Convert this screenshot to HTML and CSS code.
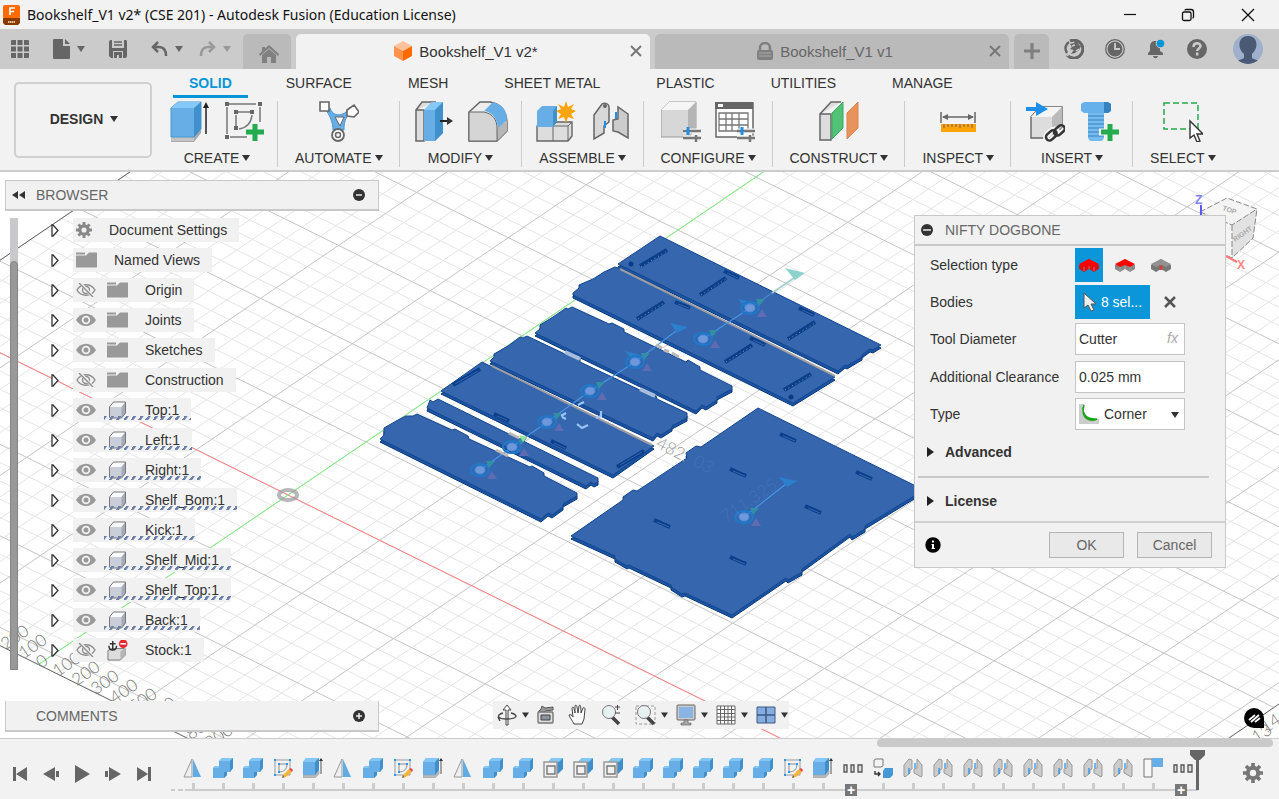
FILE: index.html
```html
<!DOCTYPE html>
<html lang="en">
<head>
    <meta charset="UTF-8">
    <meta name="viewport" content="width=device-width, initial-scale=1.0">
    <title>Bookshelf_V1 v2* (CSE 201) - Autodesk Fusion (Education License)</title>
    <link rel="stylesheet" href="styles.css">
</head>
<body>
    <!-- shared icons -->
    <svg class="sprite" aria-hidden="true">
        <symbol id="caret" viewBox="0 0 8 6"><path d="M0 0h8L4 6z" fill="currentColor"/></symbol>
        <symbol id="close" viewBox="0 0 12 12"><path d="M1 1l10 10M11 1L1 11" stroke="currentColor" stroke-width="2" fill="none"/></symbol>
        <symbol id="gear" viewBox="0 0 20 20">
            <circle cx="10" cy="10" r="5.2" fill="none" stroke="currentColor" stroke-width="4"/>
            <path d="M10 0v4M10 16v4M0 10h4M16 10h4M3 3l3 3M14 14l3 3M17 3l-3 3M6 14l-3 3" stroke="currentColor" stroke-width="3.6"/>
        </symbol>
        <symbol id="folder" viewBox="0 0 21 17"><path d="M0 1h9v2H0zM0 4h10l3-3h8v15H0z" fill="#999"/></symbol>
        <symbol id="eye" viewBox="0 0 20 14">
            <path d="M0 7C5-1.500 15-1.500 20 7 15 15 5 15 0 7z" fill="#999"/>
            <circle cx="10" cy="7" r="3.400" fill="none" stroke="#f1f1f1" stroke-width="1.800"/>
        </symbol>
        <symbol id="eye-off" viewBox="0 0 20 14">
            <path d="M1 7C5 0 15 0 19 7 15 14 5 14 1 7z" fill="none" stroke="#8d8d8d" stroke-width="1.400"/>
            <circle cx="10" cy="7" r="3.500" fill="none" stroke="#8d8d8d" stroke-width="1.400"/>
            <path d="M4 0l13 14" stroke="#f1f1f1" stroke-width="3"/><path d="M3 0l14 14" stroke="#8d8d8d" stroke-width="1.400"/>
        </symbol>
        <symbol id="body" viewBox="0 0 18 18">
            <path d="M1 6l4-5h12v11l-4 5H1z" fill="#c9ced8"/><path d="M1 6l4-5h12l-4 5z" fill="#fafbfd"/><path d="M13 6l4-5v11l-4 5z" fill="#a3abb9"/>
            <path d="M1 6l4-5h12v11l-4 5H2l-1-1z" fill="none" stroke="#777"/>
        </symbol>
        <symbol id="anchor" viewBox="0 0 22 22">
            <path d="M1 11l4-2h14v7l-5 5H1z" fill="#ddd" stroke="#777"/><path d="M14 12l5-4v8l-5 5z" fill="#b5b5b5"/>
            <path d="M6 1v9M3 4h6M2 6c0 6 8 6 8 0" fill="none" stroke="#333" stroke-width="1.500"/>
            <circle cx="17" cy="4" r="4.500" fill="#e8252d"/><path d="M14 4h6" stroke="#fff" stroke-width="1.600"/>
        </symbol>
        <symbol id="tl-mirror" viewBox="0 0 20 20">
            <path d="M9 1v18H1z" fill="#eee" stroke="#999"/><path d="M10 1v18h8z" fill="#5fade4"/>
        </symbol>
        <symbol id="tl-combine" viewBox="0 0 20 20">
            <path d="M0 10l2-2h4V3l3-3h11v10l-3 4h-3v3l-3 3H0z" fill="#66aee5"/>
            <path d="M6 3l3-3h11l-3 3zM0 10l2-2h4v2z" fill="#84c6f4"/><path d="M17 3l3-3v10l-3 4zM11 14h3v3l-3 3z" fill="#3f8fcb"/>
        </symbol>
        <symbol id="tl-sketch" viewBox="0 0 20 20">
            <path d="M2 2h15v15H2z" fill="none" stroke="#999"/><path d="M6 6h8c0 5-3 8-8 8z" fill="none" stroke="#8b8b8b"/>
            <path d="M1 1h2v2H1zM16 1h2v2h-2zM1 16h2v2H1zM5 5h2v2H5zM13 5h2v2h-2zM5 13h2v2H5z" fill="#2b96ec"/>
            <path d="M10 17l6-6 3 3-6 5-3 1z" fill="#f5b83f"/><path d="M16 11l2-1 2 2-1 2z" fill="#e44"/><path d="M10 17l1 2-2 1z" fill="#444"/>
        </symbol>
        <symbol id="tl-extrude" viewBox="0 0 20 20">
            <path d="M0 17h12l4-4v3l-4 4H0z" fill="#b9b9b9" stroke="#999" stroke-width=".5"/>
            <path d="M0 4l3-4h13v12l-4 5H0z" fill="#66aee5"/><path d="M0 4l3-4h13l-4 4z" fill="#84c6f4"/><path d="M12 4l4-4v12l-4 5z" fill="#3f8fcb"/>
            <path d="M18 2v14" stroke="#555"/><path d="M16 3l2-3 2 3z" fill="#333"/>
        </symbol>
        <symbol id="tl-shell" viewBox="0 0 20 20">
            <path d="M5 4l4-4h11v11l-5 5z" fill="#3f8fcb"/><path d="M5 4l4-4h11l-4 4z" fill="#84c6f4"/>
            <path d="M1 4h13v15H1z" fill="#f1f1f1" stroke="#999" stroke-width="1.500"/><path d="M4 8h8v8H4z" fill="#f1f1f1" stroke="#777" stroke-width="1.400"/>
        </symbol>
        <symbol id="tl-joint" viewBox="0 0 20 20">
            <path d="M1 7l5-6 3 1v9l-2 1v3l-5 4-1-1z" fill="#ccc" stroke="#999"/><path d="M19 7l-5-6v9l-3 1v4l2 1 5 3 1-1z" fill="#ccc" stroke="#999"/>
            <path d="M6 10v6M12 5v5" stroke="#2b96ec" stroke-width="1.300"/>
        </symbol>
        <symbol id="tl-group" viewBox="0 0 20 20"><path d="M1 7h3v7H1zM8 7h3v7H8zM15 7h4v7h-4z" fill="#ddd" stroke="#555" stroke-width="1.300"/></symbol>
        <symbol id="tl-component" viewBox="0 0 20 20">
            <path d="M1 2l2-1h7v7l-2 1H1z" fill="#f4f4f4" stroke="#777"/><path d="M2 13v3h5M5 14l2 2-2 2" fill="none" stroke="#333" stroke-width="1.400"/>
            <path d="M10 13l2-3h8v7l-3 3h-7z" fill="#4598d6"/>
        </symbol>
        <symbol id="tl-flag" viewBox="0 0 20 20"><path d="M1 1h8v18H1z" fill="#f6f6f6" stroke="#777"/><path d="M9 0h11v9H9z" fill="#66aee5"/></symbol>
        <symbol id="marker" viewBox="-15 -15 40 30">
            <ellipse rx="9" ry="6" fill="none" stroke="#2278c8" stroke-width="2.200"/><ellipse rx="5" ry="4" fill="#6f98dc" stroke="#4c8fe0"/>
            <path d="M6-9h9L9-2z" fill="#338fa6"/><path d="M7 9l5-8 5 8z" fill="#5e6cb4"/>
        </symbol>
    </svg>

    <header class="title-bar">
        <svg class="app-logo" viewBox="0 0 18 20"><rect width="17" height="14" rx="2" fill="#ff6b00"/><path d="M0 13h17v5l-2 2H2l-2-2z" fill="#8a3a00"/><path d="M7 10V3h5M7 6.500h4" stroke="#fff" stroke-width="1.700" fill="none"/><path d="M5 17h7" stroke="#e5c5ae" stroke-dasharray="1.500 .5" stroke-width="2"/></svg>
        <span class="window-title">Bookshelf_V1 v2* (CSE 201) - Autodesk Fusion (Education License)</span>
        <div class="window-controls">
            <button aria-label="Minimize"><svg viewBox="0 0 14 14"><path d="M1 6.500h12" stroke="#111" stroke-width="1.200"/></svg></button>
            <button aria-label="Restore"><svg viewBox="0 0 14 14" fill="none" stroke="#111" stroke-width="1.300"><rect x="1.500" y="4" width="8.500" height="8.500" rx="1.500"/><path d="M4 2.500c0-.8.500-1 1-1h5c1.500 0 2.500 1 2.500 2.500v5c0 .6-.3 1-1 1"/></svg></button>
            <button aria-label="Close"><svg viewBox="0 0 14 14"><path d="M1 1l12 12M13 1L1 13" stroke="#111" stroke-width="1.300"/></svg></button>
        </div>
    </header>

    <nav class="tab-bar">
        <div class="quick-tools">
            <button class="quick" aria-label="Data panel"><svg width="18" height="18" viewBox="0 0 18 18" fill="#666"><path d="M0 1a1 1 0 011-1h4v5H0zM6.500 0h5v5h-5zM13 0h4a1 1 0 011 1v4h-5zM0 6.500h5v5H0zM6.500 6.500h5v5h-5zM13 6.500h5v5h-5zM0 13h5v5H1a1 1 0 01-1-1zM6.500 13h5v5h-5zM13 13h5v4a1 1 0 01-1 1h-4z"/></svg></button>
            <button class="quick file" aria-label="File"><svg width="17" height="20" viewBox="0 0 17 20" fill="#666"><path d="M0 1a1 1 0 011-1h9v7h7v12a1 1 0 01-1 1H1a1 1 0 01-1-1z"/><path d="M12 0l5 5h-5z"/></svg><svg class="caret"><use href="#caret"/></svg></button>
            <button class="quick save" aria-label="Save"><svg width="18" height="18" viewBox="0 0 18 18"><path d="M0 2a2 2 0 012-2h15l1 1v15a2 2 0 01-2 2H2l-2-2z" fill="#666"/><path d="M3 0h12v8H3zM4 11h10v7H4z" fill="#cbcbcb"/><path d="M5 2h8M5 5h8" stroke="#666" stroke-width="1.500"/><path d="M5 12h8v6h-3v-3H8v3H5z" fill="#666"/></svg></button>
            <button class="quick" aria-label="Undo"><svg width="17" height="16" viewBox="0 0 17 16" fill="none" stroke="#666" stroke-width="2.500"><path d="M7 1L2 6l5 5M2 6h6c5 0 7 3 7 9"/></svg><svg class="caret"><use href="#caret"/></svg></button>
            <button class="quick redo" aria-label="Redo"><svg width="17" height="16" viewBox="0 0 17 16" fill="none" stroke="#999" stroke-width="2.500"><path d="M10 1l5 5-5 5M15 6H9C4 6 2 9 2 15"/></svg><svg class="caret"><use href="#caret"/></svg></button>
        </div>
        <button class="doc-tab home" aria-label="Home"><svg width="20" height="18" viewBox="0 0 20 18" fill="#808080"><path d="M10 0l10 9-1 2-9-8-9 8-1-2zM3 2h3v4L3 8z"/><path d="M3 10l7-6 7 6v8h-5v-6H8v6H3z"/></svg></button>
        <div class="doc-tab active">
            <svg width="18" height="20" viewBox="0 0 18 20"><path d="M9 0l9 5-9 5-9-5z" fill="#ffc29a"/><path d="M0 5l9 5v10l-9-5z" fill="#ff934c"/><path d="M18 5l-9 5v10l9-5z" fill="#ff6b00"/></svg>
            <span>Bookshelf_V1 v2*</span>
            <button class="tab-close" aria-label="Close tab"><svg><use href="#close"/></svg></button>
        </div>
        <div class="doc-tab">
            <svg width="16" height="18" viewBox="0 0 16 18"><path d="M3 9V6a5 5 0 0110 0v3" fill="none" stroke="#808080" stroke-width="2.500"/><rect y="8" width="16" height="10" rx="2" fill="#808080"/><path d="M2 11h12M2 14h12" stroke="#aaa"/></svg>
            <span>Bookshelf_V1 v1</span>
            <button class="tab-close" aria-label="Close tab"><svg><use href="#close"/></svg></button>
        </div>
        <button class="doc-tab plus" aria-label="New tab"><svg width="16" height="16" viewBox="0 0 16 16"><path d="M8 0v16M0 8h16" stroke="#808080" stroke-width="3.200"/></svg></button>
        <div class="account">
            <button aria-label="Extensions"><svg width="20" height="20" viewBox="0 0 20 20"><path d="M6 2a9 9 0 11-3 14" fill="none" stroke="#666" stroke-width="3"/><path d="M3 14C0 9 2 5 5 3" fill="none" stroke="#666" stroke-width="2.500"/><path d="M6 5l4-1 1-2 3 1 1 3 2 1-2 4-4 3-4 1 2-4-3-1 2-2z" fill="#666"/><path d="M3 17l6-6M8 7l3-1M12 12l3-2" stroke="#cbcbcb" stroke-width="1.500"/></svg></button>
            <button aria-label="Job status"><svg width="20" height="20" viewBox="0 0 20 20"><circle cx="10" cy="10" r="9.300" fill="none" stroke="#666" stroke-width="1.300"/><circle cx="10" cy="10" r="7.500" fill="#666"/><path d="M10 4v6h5" stroke="#cbcbcb" stroke-width="1.800" fill="none"/></svg></button>
            <button aria-label="Notifications"><svg width="20" height="20" viewBox="0 0 20 20"><path d="M2 16v-2l2-2V8c0-4 2-6 5-6s5 2 5 6v4l3 2v2zM7 17h5c-1 3-4 3-5 0z" fill="#666"/><circle cx="14.500" cy="4.500" r="4.300" fill="#0696d7" stroke="#cbcbcb"/></svg></button>
            <button aria-label="Help"><svg width="20" height="20" viewBox="0 0 20 20"><circle cx="10" cy="10" r="10" fill="#666"/><path d="M6.500 8c0-5 7-4.500 7-1 0 2.500-3.300 2.500-3.300 5M10.200 13.500v3" stroke="#cbcbcb" stroke-width="2.500" fill="none"/></svg></button>
            <button class="avatar" aria-label="Profile"><svg width="30" height="30" viewBox="0 0 30 30"><defs><clipPath id="round"><circle cx="15" cy="15" r="15"/></clipPath></defs><g clip-path="url(#round)"><path d="M0 0h30v30H0z" fill="#9fb0cc"/><path d="M2 30c1-4 6-4 9-6v-4C4 14 5 2 15 2s11 12 4 18v4c3 2 8 2 9 6z" fill="#4a5a75"/></g></svg></button>
        </div>
    </nav>

    <section class="ribbon">
        <button class="workspace">DESIGN <svg class="caret"><use href="#caret"/></svg></button>
        <div class="ribbon-main">
            <div class="ribbon-tabs">
                <button class="selected">SOLID</button><button>SURFACE</button><button>MESH</button><button>SHEET METAL</button><button>PLASTIC</button><button>UTILITIES</button><button>MANAGE</button>
            </div>
            <div class="groups">
                <div class="group">
                    <div class="tools">
                        <button aria-label="Extrude"><svg viewBox="0 0 40 41"><path d="M1 36h23l7-8v4l-7 9H1z" fill="#aaa"/><path d="M1 35h23v5H1z" fill="#c4c4c4"/><path d="M1 7l7-6h23v27l-7 8H1z" fill="#66aee5" stroke="#4797d0"/><path d="M1 7l7-6h23l-7 6z" fill="#86c9f8"/><path d="M24 7l7-6v27l-7 8z" fill="#4090cc"/><path d="M36 5v28" stroke="#222" stroke-width="1.500"/><path d="M33 7l3-6 3 6z" fill="#222"/></svg></button>
                        <button aria-label="Create sketch"><svg viewBox="0 0 40 41"><path d="M5 3h27M3 6v27M36 6v15M6 36h17M14 11h12M12 14v12M28 14c-1 9-6 13-13 14" fill="none" stroke="#777" stroke-width="1.500"/><path d="M1 1h4v4H1zM34 1h4v4h-4zM1 34h4v4H1zM10 9h4v4h-4zM26 9h4v4h-4zM10 25h4v4h-4z" fill="#666"/><path d="M31 23v17M22 31h18" stroke="#23ab4e" stroke-width="5"/></svg></button>
                    </div>
                    <button class="group-label">CREATE<svg class="caret"><use href="#caret"/></svg></button>
                </div>
                <div class="group">
                    <div class="tools">
                        <button aria-label="Automate"><svg viewBox="0 0 40 41"><path d="M6 8l5-1c2 6 7 9 15 5l5-6 4 5c-8 3-10 8-10 18H14C14 22 11 14 6 8z" fill="#66aee5" stroke="#4797d0"/><path d="M16 16h9l-4 9z" fill="#f7f7f7" stroke="#666"/><path d="M1 1h9v9H1zM28 9l7-5 5 7-5 5-7-1z" fill="#fff" stroke="#666" stroke-width="1.600"/><circle cx="19" cy="34" r="6" fill="#fff" stroke="#666" stroke-width="1.800"/><circle cx="19" cy="34" r="2.500" fill="none" stroke="#666" stroke-width="1.500"/></svg></button>
                    </div>
                    <button class="group-label">AUTOMATE<svg class="caret"><use href="#caret"/></svg></button>
                </div>
                <div class="group">
                    <div class="tools">
                        <button aria-label="Press pull"><svg viewBox="0 0 40 41"><path d="M2 9l6-8h14M2 9v31h8V9z" fill="#ddd" stroke="#666" stroke-width="1.500"/><path d="M10 9l8-8h11v31l-8 8H10z" fill="#66aee5"/><path d="M10 9l8-8h11l-8 8z" fill="#86c9f8"/><path d="M21 9l8-8v31l-8 8z" fill="#4090cc"/><path d="M26 20h8" stroke="#222" stroke-width="2"/><path d="M33 16l6 4-6 4z" fill="#333"/></svg></button>
                        <button aria-label="Fillet"><svg viewBox="0 0 40 41"><path d="M1 11L12 1h10c12 2 16 9 17 20v9L29 40H1z" fill="#eee" stroke="#666" stroke-width="1.500"/><path d="M1 11h15c8 2 12 7 13 16v13H1z" fill="#d5d5d5"/><path d="M29 27l10-8v11L29 40z" fill="#b7b7b7"/><path d="M16 10l9-9c10 3 14 9 14 18l-9 8C29 17 24 11 16 10z" fill="#66aee5"/><path d="M1 11h15c9 2 13 8 13 16v13H1z" fill="none" stroke="#666"/></svg></button>
                    </div>
                    <button class="group-label">MODIFY<svg class="caret"><use href="#caret"/></svg></button>
                </div>
                <div class="group">
                    <div class="tools">
                        <button aria-label="New component"><svg viewBox="0 0 40 41"><path d="M1 25l4-4h31v14l-4 5H1z" fill="#ddd" stroke="#666" stroke-width="1.400"/><path d="M17 25v15M17 25l4-4M17 25h15l4-4M32 25v15" fill="none" stroke="#666"/><path d="M1 10l5-5h15v15l-4 6H1z" fill="#66aee5"/><path d="M17 10l4-5v15l-4 6z" fill="#4090cc"/><path d="M30 0l2 6 6-3-3 5 5 2-5 3 3 5-6-2-2 6-2-6-6 2 3-5-5-3 5-2-3-5 6 3z" fill="#f9a408"/></svg></button>
                        <button aria-label="Joint"><svg viewBox="0 0 40 41"><path d="M4 14l8-11c3-2 7 0 7 3v15l-5 4v7L4 38z" fill="#d8d8d8" stroke="#666" stroke-width="1.500"/><path d="M38 13L28 6v12l-5 1v11l5 1 10 6z" fill="#ccc" stroke="#666" stroke-width="1.500"/><circle cx="15" cy="5" r="2" fill="#666"/><path d="M15 20v7M26 11v7" stroke="#1d8fe8" stroke-width="2"/></svg></button>
                    </div>
                    <button class="group-label">ASSEMBLE<svg class="caret"><use href="#caret"/></svg></button>
                </div>
                <div class="group">
                    <div class="tools">
                        <button aria-label="Configure model"><svg viewBox="0 0 40 41"><path d="M0 9l8-8h27v26l-7 9H0z" fill="#d7d7d7" stroke="#999"/><path d="M0 9l8-8h27l-8 8z" fill="#f5f5f5"/><path d="M27 9l8-8v26l-8 8z" fill="#b5b5b5"/><path d="M22 30h18M22 37h18" stroke="#f2f2f2" stroke-width="5"/><path d="M22 30h18M22 37h18M35 34v7" stroke="#777" stroke-width="2.500"/><path d="M27 26v8" stroke="#1d8fe8" stroke-width="3"/></svg></button>
                        <button aria-label="Configuration table"><svg viewBox="0 0 40 41"><path d="M1 2h37v34H1z" fill="#fff" stroke="#666" stroke-width="1.500"/><path d="M0 1h38v7H0z" fill="#666"/><path d="M3 3h5v3H3z" fill="#fff"/><path d="M4 12h29v18H4zM4 18h29M4 24h29M11 12v18M17 12v18M24 12v18" stroke="#777" fill="none" stroke-width="1.300"/><path d="M22 30h18M22 37h18" stroke="#f2f2f2" stroke-width="5"/><path d="M22 30h18M22 37h18M35 34v7" stroke="#777" stroke-width="2.500"/><path d="M27 26v8" stroke="#1d8fe8" stroke-width="3"/></svg></button>
                    </div>
                    <button class="group-label">CONFIGURE<svg class="caret"><use href="#caret"/></svg></button>
                </div>
                <div class="group">
                    <div class="tools">
                        <button aria-label="Offset plane"><svg viewBox="0 0 40 41"><path d="M1 13L12 1h10M1 13v26h11V13z" fill="#ddd" stroke="#666" stroke-width="1.500"/><path d="M13 12L24 1v26L13 38z" fill="#52c276" stroke="#3ba862"/><path d="M28 12L39 1v26L28 38z" fill="#e8935c" stroke="#d98250"/></svg></button>
                    </div>
                    <button class="group-label">CONSTRUCT<svg class="caret"><use href="#caret"/></svg></button>
                </div>
                <div class="group">
                    <div class="tools">
                        <button aria-label="Measure"><svg viewBox="0 0 40 41"><path d="M3 11v11M37 11v11M5 16h30" stroke="#666" stroke-width="1.500"/><path d="M4 16l6-3v6zM36 16l-6-3v6z" fill="#666"/><path d="M3 23h35v8H3z" fill="#f9a408"/><path d="M6 23v4M10 23v3M14 23v3M18 23v3M22 23v4M26 23v3M30 23v3M34 23v4" stroke="#855"/></svg></button>
                    </div>
                    <button class="group-label">INSPECT<svg class="caret"><use href="#caret"/></svg></button>
                </div>
                <div class="group">
                    <div class="tools">
                        <button aria-label="Insert derive"><svg viewBox="0 0 40 41"><path d="M6 16l9-10h22v20L27 37H6z" fill="#ddd" stroke="#666" stroke-width="1.400"/><path d="M6 16l9-10h22L27 16z" fill="#f4f4f4"/><path d="M27 16L37 6v20L27 37z" fill="#bbb"/><path d="M1 6h10V1l12 7-12 7v-5H1z" fill="#1d8fe8"/><g fill="none" stroke="#f2f2f2" stroke-width="6"><rect x="20" y="31" width="13" height="7" rx="3.500" transform="rotate(-42 26 34)"/></g><g fill="none" stroke="#333" stroke-width="2.500"><rect x="20" y="31" width="12" height="7" rx="3.500" transform="rotate(-42 26 34)"/><rect x="28" y="26" width="12" height="7" rx="3.500" transform="rotate(-42 34 29)"/></g></svg></button>
                        <button aria-label="Insert fastener"><svg viewBox="0 0 40 41"><path d="M9 11h16v26l-2 3H11l-2-3z" fill="#77baf0"/><path d="M9 15h16M9 19h16M9 23h16M9 27h16M9 31h16M9 35h16" stroke="#3583c0"/><path d="M2 3l3-2h24l3 2v7l-3 2H5l-3-2z" fill="#66b1ec"/><path d="M25 1h4l3 2v7l-3 2h-4z" fill="#3583c0"/><path d="M31 21v20M20 31h20" stroke="#f2f2f2" stroke-width="7"/><path d="M31 23v17M22 31h18" stroke="#23ab4e" stroke-width="5"/></svg></button>
                    </div>
                    <button class="group-label">INSERT<svg class="caret"><use href="#caret"/></svg></button>
                </div>
                <div class="group">
                    <div class="tools">
                        <button aria-label="Select"><svg viewBox="0 0 40 41"><path d="M1 2h34v26H1z" fill="none" stroke="#23ab4e" stroke-width="1.500" stroke-dasharray="6 3"/><path d="M27 20v17l4-3 3 7 3-1-3-7h6z" fill="#fff" stroke="#333" stroke-width="1.400"/></svg></button>
                    </div>
                    <button class="group-label">SELECT<svg class="caret"><use href="#caret"/></svg></button>
                </div>
            </div>
        </div>
    </section>

    <main class="viewport">
        <svg class="scene" viewBox="0 172 1279 566" preserveAspectRatio="xMidYMid slice">
            <g id="grid"></g>
            <g id="gridLabels" class="grid-label"></g>
            <ellipse cx="288" cy="495" rx="9" ry="5" fill="none" stroke="#999" stroke-opacity=".7" stroke-width="4"/>

            <defs>
                <path id="top" d="M660 236L881 345 873 350 870 349 862 355 862 357 847 366 845 365 838 371 618 264z"/>
                <path id="left" d="M615 267L618 268 835 377 793 403 573 295 573 293 579 288 579 285 593 279 604 272z"/>
                <path id="shelf1" d="M572 307L609 324 612 323 624 329 624 332 686 362 688 360 700 367 700 370 732 386 732 389 717 397 717 400 706 407 702 405 696 411 535 333 540 329 540 325 553 317 566 308 568 309z"/>
                <path id="shelf2" d="M520 337L523 338 527 336 565 354 568 353 580 359 580 362 642 391 645 390 656 396 657 399 687 413 687 418 672 426 672 428 661 435 657 433 653 438 490 361 494 357 494 354 508 346z"/>
                <path id="shelf3" d="M482 362L654 446 613 475 441 391z"/>
                <path id="kick" d="M430 400L433 402 438 399 598 478 598 482 594 484 591 482 586 486 427 408z"/>
                <path id="bottom" d="M417 414L452 430 455 429 468 436 469 439 530 467 532 466 544 473 544 476 577 493 577 496 563 504 563 507 552 515 548 513 541 519 380 439 384 435 384 428 398 420 406 416 413 416z"/>
                <path id="back" d="M758 408L924 490 865 526 865 529 852 537 850 534 802 569 802 572 788 580 786 578 732 615 685 593 682 594 671 587 671 585 629 565 627 566 615 559 615 556 571 536 623 500 623 497 633 490 637 491 687 458 686 453 696 446 701 447z"/>
            </defs>
            <g class="plate-side" transform="translate(0 3)">
                <use href="#top"/><use href="#left"/><use href="#shelf1"/><use href="#shelf2"/><use href="#shelf3"/><use href="#kick"/><use href="#bottom"/><use href="#back"/>
            </g>
            <g class="plate">
                <use href="#top"/><use href="#left"/><use href="#shelf1"/><use href="#shelf2"/><use href="#shelf3"/><use href="#kick"/><use href="#bottom"/><use href="#back"/>
            </g>
            <path class="gap-line" d="M620 269L835 376M492 366L652 445"/>
            <path class="gap-line light" d="M565 352L580 359M640 389L655 396"/>
            <path class="slot" d="M640 266L667 250M700 295L726 278M788 339L815 322M637 319L664 302M725 362L752 345M784 390L811 374M453 385L480 369M617 467L644 451"/>
            <path class="slot-dots" d="M641 267L667 251M701 295L726 279M789 339L815 323M638 319L664 303M726 362L752 346M785 390L811 375"/>
            <path class="slot" d="M724 271L739 278M799 308L814 315M675 302L690 308M750 338L765 345M494 414L509 421M551 441L566 448M780 434L796 441M730 469L746 476M856 472L872 479M805 506L821 513M654 520L670 527M730 557L746 564"/>
            <path class="slot-inner" d="M727 273L738 278M802 310L813 315M678 304L689 308M753 340L764 345M783 436L795 441M733 471L745 476M859 474L871 479M808 508L820 513M657 522L669 527M733 559L745 564M455 384L478 371M620 465L642 452M497 416L507 420M554 443L565 448"/>
            <circle cx="631" cy="264" r="2.500" fill="#0a3c86"/><circle cx="791" cy="397" r="2.500" fill="#0a3c86"/>

            <path d="M480 470L512 447 547 422 590 391 635 362 680 328M703 339L750 308M744 517L786 484" fill="none" stroke="#4a94e4" stroke-width="1.200"/>
            <path d="M750 308L772 293" stroke="#4a94e4"/><path d="M772 293L797 276" stroke="#a8cfcf" stroke-width="2"/>
            <path d="M785 268l20 5-10 7z" fill="#8ed2cd"/><path d="M670 323l18 4-11 6zM779 477l19 4-11 6zM738 299l16 4-8 6zM625 351l16 4-8 6z" fill="#2c7fcb"/>
            <g id="markers"></g>
            <path d="M561 416l5-3M562 417l4 2M578 405l6-3M601 411v5l-5 2M577 424l5 4 6-3" fill="none" stroke="#9cc4fb" stroke-width="2.200"/>
            <text class="dimension" x="655" y="447" transform="rotate(27 655 447)">482.</text>
            <text class="dimension faint" x="692" y="465" transform="rotate(27 692 465)">03</text>
            <text class="dimension faint" x="726" y="523" transform="rotate(-34 726 523)">711.325</text>
            <path d="M656 345l6 3M664 350l5 2M672 353l7 4M509 433l10 5M496 450l12 6" stroke="#b9b9b9" stroke-width="3"/>
            <path d="M519 435l8 2-4 5z" fill="#94e094"/>

            <g class="cube">
                <path d="M1200 212L1227 198 1257 209 1253 238 1232 258 1205 246z" fill="#f3f3f3" fill-opacity=".9"/>
                <path d="M1232 225l25-16-4 29-21 20z" fill="#e2e2e2"/>
                <path d="M1200 212L1227 198 1257 209 1253 238 1232 258 1205 246zM1200 212l32 13 25-16M1232 225v33" fill="none" stroke="#888" stroke-dasharray="6 2"/>
                <text x="1222" y="210" transform="rotate(18 1222 210)">TOP</text>
                <text x="1235" y="242" transform="rotate(-35 1235 242)">RIGHT</text>
                <path d="M1201 205v10" stroke="#5a5aff" stroke-width="2"/><path d="M1226 256l11 6" stroke="#ff7a7a" stroke-width="2"/>
                <text class="axis-name z" x="1195" y="204">Z</text><text class="axis-name x" x="1237" y="269">X</text>
            </g>
        </svg>

        <aside class="browser">
            <div class="panel-head">
                <svg width="13" height="8" viewBox="0 0 13 8"><path d="M6 0v8L0 4zM13 0v8L7 4z" fill="#333"/></svg>
                <h2>BROWSER</h2>
                <button aria-label="Collapse browser"><svg width="12" height="12" viewBox="0 0 12 12"><circle cx="6" cy="6" r="6" fill="#333"/><path d="M3 6h6" stroke="#eee" stroke-width="1.500"/></svg></button>
            </div>
            <div class="tree-wrap">
                <div class="tree-scroll"><div class="tree-thumb"></div></div>
                <ul id="tree" class="tree"></ul>
            </div>
        </aside>

        <div class="panel-head comments">
            <h2>COMMENTS</h2>
            <button aria-label="Add comment"><svg width="12" height="12" viewBox="0 0 12 12"><circle cx="6" cy="6" r="6" fill="#333"/><path d="M3 6h6M6 3v6" stroke="#eee" stroke-width="1.500"/></svg></button>
        </div>

        <div class="nav-bar">
            <button aria-label="Orbit"><svg width="20" height="22" viewBox="0 0 20 22"><path d="M9 21V6H6l4-5 4 5h-3v15z" fill="#fff" stroke="#444"/><path d="M6 9c-7 2-6 6 4 6s12-4 4-6M3 17l-2-4" fill="none" stroke="#444" stroke-width="1.400"/></svg><svg class="caret"><use href="#caret"/></svg></button>
            <button aria-label="Look at"><svg width="18" height="20" viewBox="0 0 18 20"><path d="M1 7l3-3 1-3 3 2 8-1v3l-8 1-1 2z" fill="#999" stroke="#555"/><rect x="1" y="7" width="15" height="11" rx="1" fill="#ddd" stroke="#777" stroke-width="1.400"/><path d="M4 10h9v5H4z" fill="#8a929c" stroke="#444"/></svg></button>
            <button aria-label="Pan"><svg width="20" height="22" viewBox="0 0 20 22"><path d="M6 20C4 16 2 14 1 11c1-1 3 0 4 2L4 4c1-2 2-1 3 5V2c1-2 2-1 3 7l1-7c1-2 2-1 2 7l2-5c1-1 2 0 2 1l-1 10-2 5z" fill="#fff" stroke="#444"/></svg></button>
            <button aria-label="Zoom"><svg width="21" height="22" viewBox="0 0 21 22"><path d="M11 13l7 7" stroke="#444" stroke-width="3.500"/><circle cx="8" cy="8" r="6.500" fill="#e8f1f1" stroke="#777"/><path d="M14 3h5M16.500 1v5M14 9h5" stroke="#444"/></svg></button>
            <button aria-label="Fit"><svg width="21" height="22" viewBox="0 0 21 22"><path d="M1 2h19v18H1z" fill="none" stroke="#999" stroke-dasharray="3 2"/><path d="M12 13l7 7" stroke="#444" stroke-width="3.500"/><circle cx="9" cy="8" r="6.500" fill="#e8f1f1" stroke="#777"/></svg><svg class="caret"><use href="#caret"/></svg></button>
            <button aria-label="Display settings"><svg width="20" height="22" viewBox="0 0 20 22"><rect x="1" y="1" width="18" height="15" rx="1" fill="#ccc" stroke="#666"/><path d="M3 3h14v11H3z" fill="#8ab4e3"/><path d="M8 16h4v3h3v2H5v-2h3z" fill="#aaa" stroke="#666" stroke-width=".7"/></svg><svg class="caret"><use href="#caret"/></svg></button>
            <button aria-label="Grid and snaps"><svg width="20" height="20" viewBox="0 0 20 20"><path d="M1 1h18v18H1z" fill="#fff"/><path d="M1 1h18v18H1zM4.500 1v18M8.500 1v18M12 1v18M15.500 1v18M1 4.500h18M1 8.500h18M1 12h18M1 15.500h18" fill="none" stroke="#666"/></svg><svg class="caret"><use href="#caret"/></svg></button>
            <button aria-label="Viewports"><svg width="20" height="18" viewBox="0 0 20 18"><path d="M1 1h18v16H1z" fill="#86ade0" stroke="#3c5a80"/><path d="M10 1v16M1 9h18" stroke="#3c5a80" stroke-width="1.500"/></svg><svg class="caret"><use href="#caret"/></svg></button>
        </div>

        <form class="dialog">
            <div class="dialog-head">
                <svg width="12" height="12" viewBox="0 0 12 12"><circle cx="6" cy="6" r="6" fill="#333"/><path d="M2 6h8" stroke="#eee" stroke-width="1.500"/></svg>
                <h2>NIFTY DOGBONE</h2>
            </div>
            <div class="dialog-body">
                <div class="field">
                    <span>Selection type</span>
                    <div class="choices">
                        <button type="button" class="choice on" aria-label="Bodies"><svg viewBox="0 0 20 14"><path d="M0 7l10-6 10 6v4l-5 3-5-3-5 3-5-3z" fill="#d41414"/><path d="M0 6l10-5 10 5-5 3-5-1-5 1z" fill="red"/><path d="M5 9v4M15 9v4M10 8v3" stroke="#f88" stroke-width=".6"/></svg></button>
                        <button type="button" class="choice" aria-label="Faces"><svg viewBox="0 0 20 14"><path d="M0 7l10-6 10 6v4l-5 3-5-3-5 3-5-3z" fill="#888"/><path d="M0 6l10-5 10 5-5 3-5-2-5 2z" fill="red"/><path d="M5 9v4M15 9v4M10 8v3" stroke="#bbb" stroke-width=".6"/></svg></button>
                        <button type="button" class="choice" aria-label="Edges"><svg viewBox="0 0 20 14"><path d="M0 7l10-6 10 6v4l-5 3-5-3-5 3-5-3z" fill="#777"/><path d="M0 6l10-5 10 5-5 3-5-2-5 2z" fill="#929292"/><path d="M10 7v5" stroke="#c44" stroke-width="3"/></svg></button>
                    </div>
                </div>
                <div class="field">
                    <span>Bodies</span>
                    <div class="choices">
                        <button type="button" class="selection"><svg width="14" height="20" viewBox="0 0 14 20"><path d="M1 1v15l4-3 3 6 3-1-3-6h5z" fill="#eee" stroke="#555"/></svg>8 sel...</button>
                        <button type="button" class="clear" aria-label="Clear selection"><svg viewBox="0 0 12 12"><path d="M1 1l10 10M11 1L1 11" stroke="#555" stroke-width="2.500"/></svg></button>
                    </div>
                </div>
                <div class="field tall">
                    <label for="diameter">Tool Diameter</label>
                    <div class="input-wrap"><input id="diameter" type="text" value="Cutter"><i>fx</i></div>
                </div>
                <div class="field">
                    <label for="clearance">Additional Clearance</label>
                    <div class="input-wrap"><input id="clearance" type="text" value="0.025 mm"></div>
                </div>
                <div class="field tall">
                    <label for="type">Type</label>
                    <div class="input-wrap">
                        <select id="type"><option>Corner</option></select>
                        <svg class="corner-icon" width="20" height="20" viewBox="0 0 20 20"><path d="M0 0h20v20H0z" fill="#ccc"/><path d="M5 0h15v15H12C6 14 4 7 5 0z" fill="#fff"/><path d="M5 1C2 8 6 16 18 15c-6 3-17 1-13-14z" fill="#19a519" stroke="#19a519" stroke-width="1.500"/></svg>
                        <svg class="caret"><use href="#caret"/></svg>
                    </div>
                </div>
                <button type="button" class="fold"><svg width="7" height="10" viewBox="0 0 7 10"><path d="M0 0l7 5-7 5z" fill="#222"/></svg>Advanced</button>
                <hr>
                <button type="button" class="fold"><svg width="7" height="10" viewBox="0 0 7 10"><path d="M0 0l7 5-7 5z" fill="#222"/></svg>License</button>
            </div>
            <div class="dialog-foot">
                <svg width="16" height="16" viewBox="0 0 16 16"><circle cx="8" cy="8" r="7.700"/><path d="M6.500 7H9v5H6.500V11H7V8h-.5zM9 11h1v1H9zM7 3.500h2v2H7z" fill="#fff"/></svg>
                <button type="button">OK</button>
                <button type="button">Cancel</button>
            </div>
        </form>

        <button class="assistant" aria-label="Assistant"><svg width="21" height="21" viewBox="0 0 21 21"><path d="M10 0a10 10 0 0110 10v10H10A10 10 0 0110 0z"/><path d="M5 12l6-5M7 14l8-7M11 14l5-4" stroke="#fff" stroke-width="1.800"/></svg></button>
    </main>

    <footer class="timeline">
        <div class="time-scroll"></div>
        <div class="playback">
            <button aria-label="Start"><svg viewBox="0 0 16 18"><path d="M1 2h3v14H1zM15 2v14L4 9z"/></svg></button>
            <button aria-label="Back"><svg viewBox="0 0 16 18"><path d="M12 2v14L0 9zM13 6h3v6h-3z"/></svg></button>
            <button aria-label="Play"><svg viewBox="0 0 16 18"><path d="M1 0l15 9-15 9z"/></svg></button>
            <button aria-label="Forward"><svg viewBox="0 0 16 18"><path d="M4 2v14l12-7zM0 6h3v6H0z"/></svg></button>
            <button aria-label="End"><svg viewBox="0 0 16 18"><path d="M12 2h3v14h-3zM1 2v14l11-7z"/></svg></button>
        </div>
        <ol id="features" class="features"></ol>
        <svg class="playhead" width="15" height="40" viewBox="0 0 15 40"><path d="M0 0h15v5l-5 5H9v30H6V10H5L0 5z" fill="#666"/></svg>
        <button class="settings" aria-label="Timeline settings"><svg><use href="#gear"/></svg></button>
    </footer>

    <script src="script.js"></script>
</body>
</html>
```
FILE: styles.css
```css
* {
    box-sizing: border-box;
}
body {
    margin: 0;
    height: 100vh;
    display: flex;
    flex-direction: column;
    overflow: hidden;
    background: #f2f2f2;
    color: #333;
    font: 14px "Liberation Sans", Arial, sans-serif;
}
button {
    padding: 0;
    border: 0;
    background: none;
    color: inherit;
    font: inherit;
    display: flex;
    align-items: center;
    justify-content: center;
}
h2 {
    margin: 0;
    font-size: 14px;
    font-weight: normal;
    color: #666;
}
.sprite {
    position: absolute;
    width: 0;
    height: 0;
}
.caret {
    width: 8px;
    height: 6px;
    flex: none;
}

/* Window title */
.title-bar {
    flex: none;
    height: 29px;
    display: flex;
    align-items: center;
    padding-left: 3px;
}
.app-logo {
    width: 18px;
    height: 20px;
}
.window-title {
    margin-left: 6px;
    font-family: "Noto Sans", "Open Sans", sans-serif;
    font-size: 14px;
    color: #111;
}
.window-controls {
    margin-left: auto;
    display: flex;
}
.window-controls button {
    width: 58px;
    height: 28px;
}
.window-controls button:last-child {
    width: 62px;
}
.window-controls svg {
    width: 14px;
    height: 14px;
}

/* Document tabs */
.tab-bar {
    flex: none;
    height: 40px;
    display: flex;
    align-items: flex-end;
    gap: 5px;
    background: #cbcbcb;
    color: #666;
}
.quick-tools {
    width: 238px;
    height: 40px;
    padding-left: 11px;
    display: flex;
    align-items: center;
    gap: 16px;
}
.quick {
    gap: 7px;
}
.quick.file {
    margin-left: 8px;
}
.quick.save {
    margin: 0 8px;
}
.quick.redo {
    color: #999;
}
.doc-tab {
    position: relative;
    flex: 1;
    height: 35px;
    padding-bottom: 1px;
    display: flex;
    align-items: center;
    justify-content: center;
    gap: 7px;
    border-radius: 5px 5px 0 0;
    background: #bababa;
    font-size: 15px;
    color: #666;
}
.doc-tab.active {
    background: #f2f2f2;
    color: #333;
}
.doc-tab.home {
    flex: none;
    width: 48px;
    padding: 4px 0 0 4px;
}
.doc-tab.plus {
    flex: none;
    width: 35px;
}
.doc-tab span {
    padding-right: 14px;
}
.tab-close {
    position: absolute;
    right: 8px;
    color: #777;
}
.tab-close svg {
    width: 12px;
    height: 12px;
}
.account {
    height: 40px;
    width: 225px;
    padding-left: 10px;
    display: flex;
    align-items: center;
    gap: 21px;
}
.account .avatar {
    margin-left: 5px;
}

/* Ribbon */
.ribbon {
    flex: none;
    height: 103px;
    display: flex;
    border-bottom: 2px solid #ccc;
}
.workspace {
    width: 138px;
    height: 76px;
    margin: 13px 5px 0 14px;
    padding: 0 0 2px 2px;
    border: 2px solid #d0d0d0;
    border-radius: 5px;
    font-weight: bold;
    gap: 7px;
}
.ribbon-tabs {
    display: flex;
    gap: 24px;
    height: 29px;
    padding-left: 16px;
}
.ribbon-tabs button {
    padding: 1px 16px 0;
    border-bottom: 3px solid transparent;
}
.ribbon-tabs .selected {
    margin-right: -2px;
    color: #0696d7;
    border-color: #0696d7;
    font-weight: bold;
}
.groups {
    display: flex;
    gap: 1px;
    padding-top: 3px;
}
.group {
    height: 66px;
    padding: 0 16px;
    border-right: 1px solid #ccc;
    display: flex;
    flex-direction: column;
    align-items: center;
}
.group:last-child {
    border: 0;
}
.tools {
    display: flex;
    gap: 14px;
    margin: 0 -3px;
}
.tools svg {
    display: block;
    width: 40px;
    height: 41px;
}
.group-label {
    margin-top: 8px;
    gap: 3px;
    white-space: nowrap;
}

/* 3D view */
.viewport {
    position: relative;
    flex: 1;
    min-height: 0;
    overflow: hidden;
    background: #fff;
}
.scene {
    position: absolute;
    inset: 0;
    width: 100%;
    height: 100%;
}
.minor { stroke: #e5e5e5; }
.major { stroke: #c4c4c4; }
.edge { stroke: #666; }
.axis-x { stroke: #ff8080; }
.axis-y { stroke: #7cf27c; }
.grid-label {
    font-family: Lato, "Liberation Sans", sans-serif;
    font-weight: 300;
    font-size: 17px;
    fill: #777;
    text-anchor: middle;
}
.plate {
    fill: #3566ae;
    stroke: #12458f;
}
.plate-side {
    fill: #1b55a3;
    stroke: #063579;
}
.gap-line {
    stroke: #9b9ca5;
    stroke-width: 2px;
}
.gap-line.light {
    stroke: #a9bedc;
    stroke-width: 4px;
}
.slot {
    stroke: #0b3f8b;
    stroke-width: 4px;
}
.slot-dots {
    stroke: #8e99a5;
    stroke-width: 1px;
    stroke-dasharray: 1 3;
}
.slot-inner {
    stroke: #3566ae;
    stroke-width: 1px;
}
.dimension {
    font-family: Lato, "Liberation Sans", sans-serif;
    font-weight: 300;
    font-size: 17px;
    fill: #999;
}
.dimension.faint {
    fill: #6c94d4;
    fill-opacity: .3;
}
.cube text {
    font-size: 7px;
    font-weight: bold;
    fill: #aaa;
}
.cube .axis-name {
    font-size: 12px;
}
.cube .z { fill: #8080ff; }
.cube .x { fill: #ff8888; }

/* Panels over the view */
.browser {
    position: absolute;
    left: 5px;
    top: 8px;
    width: 374px;
}
.panel-head {
    height: 31px;
    padding: 0 13px 0 6px;
    display: flex;
    align-items: center;
    background: #f1f1f1;
    border: 1px solid #c8c8c8;
    border-bottom-width: 2px;
}
.panel-head h2 {
    margin-left: 11px;
    flex: 1;
}
.comments {
    position: absolute;
    left: 5px;
    bottom: 6px;
    width: 374px;
    padding-left: 19px;
    border-top: 0;
}
.tree-wrap {
    display: flex;
    margin-top: 7px;
    padding-left: 5px;
}
.tree-scroll {
    width: 8px;
    height: 452px;
    padding-top: 43px;
    background: #c9c9cb;
}
.tree-thumb {
    height: 100%;
    border: 1px solid #858585;
    border-radius: 4px 4px 0 0;
    background: #999;
}
.tree {
    list-style: none;
    margin: -3px 0 0;
    padding: 0 0 0 33px;
}
.tree li {
    height: 30px;
    display: flex;
    align-items: center;
}
.tree .arrow svg {
    width: 8px;
    height: 13px;
}
.tree .pill {
    position: relative;
    height: 24px;
    margin-left: 14px;
    padding: 0 12px 0 3px;
    display: flex;
    align-items: center;
    background: #f1f1f1;
}
.pill .eye {
    width: 20px;
    height: 14px;
    margin-right: 11px;
}
.pill .kind {
    width: 21px;
    height: 18px;
    margin-right: 17px;
}
.pill .anchor {
    height: 21px;
}
.pill .gear {
    width: 16px;
    height: 16px;
    color: #888;
}
.pill.linked::after {
    content: "";
    position: absolute;
    left: 31px;
    right: 0;
    bottom: 2px;
    height: 4px;
    background: repeating-linear-gradient(125deg, #6b80a8 0 2px, transparent 3px 6px);
}
.nav-bar {
    position: absolute;
    left: 493px;
    bottom: 9px;
    height: 28px;
    padding: 0 6px 0 4px;
    display: flex;
    align-items: center;
    gap: 13px;
    background: #f1f1f1;
}
.nav-bar button {
    gap: 5px;
}
.nav-bar .caret {
    width: 7px;
    margin-right: -5px;
}
.assistant {
    position: absolute;
    right: 14px;
    bottom: 9px;
}

/* Command dialog */
.dialog {
    position: absolute;
    top: 43px;
    right: 53px;
    width: 312px;
    background: #f1f1f1;
    border: 1px solid #c8c8c8;
}
.dialog-head {
    height: 30px;
    padding-left: 6px;
    display: flex;
    align-items: center;
    gap: 12px;
    border-bottom: 2px solid #c8c8c8;
}
.dialog-body {
    padding: 0 16px 0 15px;
}
.field {
    height: 37px;
    display: grid;
    grid-template-columns: 145px 1fr;
    align-items: center;
}
.field.tall {
    height: 38px;
}
.choices {
    display: flex;
    align-items: center;
    gap: 8px;
}
.choice {
    width: 28px;
    height: 34px;
}
.choice.on,
.selection {
    background: #0a96d9;
}
.choice svg {
    width: 20px;
    height: 14px;
}
.selection {
    width: 75px;
    height: 34px;
    gap: 4px;
    color: #fff;
}
.clear {
    width: 24px;
    height: 24px;
}
.clear svg {
    width: 12px;
    height: 12px;
}
.input-wrap {
    position: relative;
    width: 110px;
}
.input-wrap input,
.input-wrap select {
    width: 100%;
    height: 32px;
    padding: 0 3px;
    border: 1px solid #c5c5c5;
    border-radius: 0;
    background: #fff;
    color: #333;
    font: inherit;
    appearance: none;
}
.input-wrap select {
    padding-left: 28px;
}
.input-wrap i {
    position: absolute;
    right: 7px;
    top: 7px;
    color: #aaa;
}
.corner-icon {
    position: absolute;
    left: 4px;
    top: 6px;
}
.input-wrap .caret {
    position: absolute;
    right: 6px;
    top: 14px;
}
.fold {
    height: 38px;
    gap: 11px;
    margin-left: -3px;
    font-weight: bold;
}
.dialog hr {
    margin: 5px 0 4px -12px;
    border: 0;
    border-top: 2px solid #c8c8c8;
}
.dialog-foot {
    height: 46px;
    margin-top: 1px;
    padding: 0 13px 0 10px;
    display: flex;
    align-items: center;
    gap: 13px;
    border-top: 2px solid #d0d0d0;
}
.dialog-foot svg {
    margin-right: auto;
}
.dialog-foot button {
    width: 75px;
    height: 26px;
    border: 1px solid #b5b5b5;
    background: #e9e9e9;
    color: #666;
}

/* Timeline */
.timeline {
    position: relative;
    flex: none;
    height: 61px;
    display: flex;
    border-top: 1px solid #ccc;
}
.time-scroll {
    position: absolute;
    right: 6px;
    top: 0;
    width: 396px;
    height: 8px;
    border-radius: 4px;
    background: #c9c9c9;
}
.playback {
    width: 171px;
    padding: 9px 0 0 12px;
    display: flex;
    align-items: center;
    align-self: flex-start;
    gap: 15px;
}
.playback svg {
    width: 16px;
    height: 18px;
    margin-top: 17px;
    fill: #666;
}
.features {
    list-style: none;
    margin: 0;
    padding: 19px 0 0 7px;
    height: 52px;
    display: flex;
    background: linear-gradient(90deg, #ccc 4px, transparent 4px 7px, #ccc 7px 12px, transparent 12px 14px, #ccc 14px) bottom / 100% 2px no-repeat;
}
.features li {
    position: relative;
    width: 30px;
    height: 33px;
    display: flex;
    justify-content: center;
    align-items: flex-start;
}
.features svg {
    display: block;
    width: 20px;
    height: 20px;
}
.features li::after {
    content: "";
    position: absolute;
    left: 14px;
    bottom: 2px;
    width: 3px;
    height: 6px;
    background: #ccc;
}
.features .has-group::after {
    content: "+";
    left: 7px;
    bottom: -5px;
    width: 12px;
    height: 12px;
    background: #777;
    color: #fff;
    font: bold 14px/12px "Liberation Sans", sans-serif;
    text-align: center;
}
.playhead {
    margin: 11px 0 0 -8px;
}
.settings {
    margin: 14px 16px 0 auto;
    height: 40px;
    color: #777;
}
.settings svg {
    width: 20px;
    height: 20px;
}
```
FILE: script.js
```js
const NS = 'http://www.w3.org/2000/svg';

// ground plane: one unit is a major grid cell
function point(n, m) {
    return [288 + 91.7 * n + 78 * m, 495 + 45.3 * n - 53 * m];
}

function addLine(from, to, cls) {
    const line = document.createElementNS(NS, 'line');
    line.setAttribute('x1', from[0]);
    line.setAttribute('y1', from[1]);
    line.setAttribute('x2', to[0]);
    line.setAttribute('y2', to[1]);
    line.setAttribute('class', cls);
    document.getElementById('grid').appendChild(line);
}

function drawGrid() {
    ['minor', 'major'].forEach(kind => {
        for (let i = -20; i <= 41; i++) {
            if ((i % 5 === 0) === (kind === 'major')) {
                addLine(point(i / 5, -3.2), point(i / 5, 12), kind);
            }
        }
        for (let i = -16; i <= 60; i++) {
            if ((i % 5 === 0) === (kind === 'major')) {
                addLine(point(-4, i / 5), point(8.2, i / 5), kind);
            }
        }
    });
    addLine(point(-4, -3.2), point(-4, 12), 'edge');
    addLine(point(8.2, -3.2), point(8.2, 12), 'edge');
    addLine(point(-4, -3.2), point(8.2, -3.2), 'edge');
    addLine(point(-4, 0), point(8.2, 0), 'axis-x');
    addLine(point(0, -3.2), point(0, 12), 'axis-y');
}

function addLabel(text, x, y) {
    const label = document.createElementNS(NS, 'text');
    label.textContent = text;
    label.setAttribute('transform', `translate(${x} ${y}) rotate(-34)`);
    document.getElementById('gridLabels').appendChild(label);
}

function drawLabels() {
    addLabel('200', 18, 642);
    addLabel('100', 36, 651);
    addLabel('0', 45, 666);
    for (let i = 1; i <= 9; i++) {
        addLabel(i * 100, 51 + i * 19, 660 + i * 9);
    }
    addLabel('14', 1274, 728);
    addLabel('13', 1265, 738);
}

function drawMarkers() {
    const spots = [[750, 308], [703, 339], [635, 362], [590, 391], [547, 422], [512, 447], [480, 470], [744, 517]];
    document.getElementById('markers').innerHTML = spots.map(([x, y]) =>
        `<use href="#marker" x="${x - 15}" y="${y - 15}" width="40" height="30"/>`
    ).join('');
}

const treeItems = [
    { name: 'Document Settings', kind: 'gear' },
    { name: 'Named Views', kind: 'folder' },
    { name: 'Origin', kind: 'folder', eye: 'eye-off' },
    { name: 'Joints', kind: 'folder', eye: 'eye' },
    { name: 'Sketches', kind: 'folder', eye: 'eye' },
    { name: 'Construction', kind: 'folder', eye: 'eye-off' },
    { name: 'Top:1', kind: 'body', eye: 'eye' },
    { name: 'Left:1', kind: 'body', eye: 'eye' },
    { name: 'Right:1', kind: 'body', eye: 'eye' },
    { name: 'Shelf_Bom:1', kind: 'body', eye: 'eye' },
    { name: 'Kick:1', kind: 'body', eye: 'eye' },
    { name: 'Shelf_Mid:1', kind: 'body', eye: 'eye' },
    { name: 'Shelf_Top:1', kind: 'body', eye: 'eye' },
    { name: 'Back:1', kind: 'body', eye: 'eye' },
    { name: 'Stock:1', kind: 'anchor', eye: 'eye-off' }
];

function drawTree() {
    document.getElementById('tree').innerHTML = treeItems.map(item => `
        <li>
            <button class="arrow" aria-label="Expand ${item.name}"><svg viewBox="0 0 8 13"><path d="M1 1h1l5 5.500L2 12H1z" fill="#fff" stroke="#333" stroke-width="1.300"/></svg></button>
            <div class="pill ${item.kind === 'body' ? 'linked' : ''}">
                ${item.eye ? `<svg class="eye"><use href="#${item.eye}"/></svg>` : ''}
                <svg class="kind ${item.kind}"><use href="#${item.kind}"/></svg>
                <span>${item.name}</span>
            </div>
        </li>`).join('');
}

const features = ('mirror combine combine sketch extrude mirror combine sketch extrude mirror combine combine ' +
    'shell shell shell combine combine combine combine combine sketch extrude group component ' +
    'joint joint joint joint joint joint joint joint flag group').split(' ');

function drawTimeline() {
    document.getElementById('features').innerHTML = features.map(name => `
        <li class="${name === 'group' ? 'has-group' : ''}"><button aria-label="${name}"><svg><use href="#tl-${name}"/></svg></button></li>`
    ).join('');
}

drawGrid();
drawLabels();
drawMarkers();
drawTree();
drawTimeline();
```
